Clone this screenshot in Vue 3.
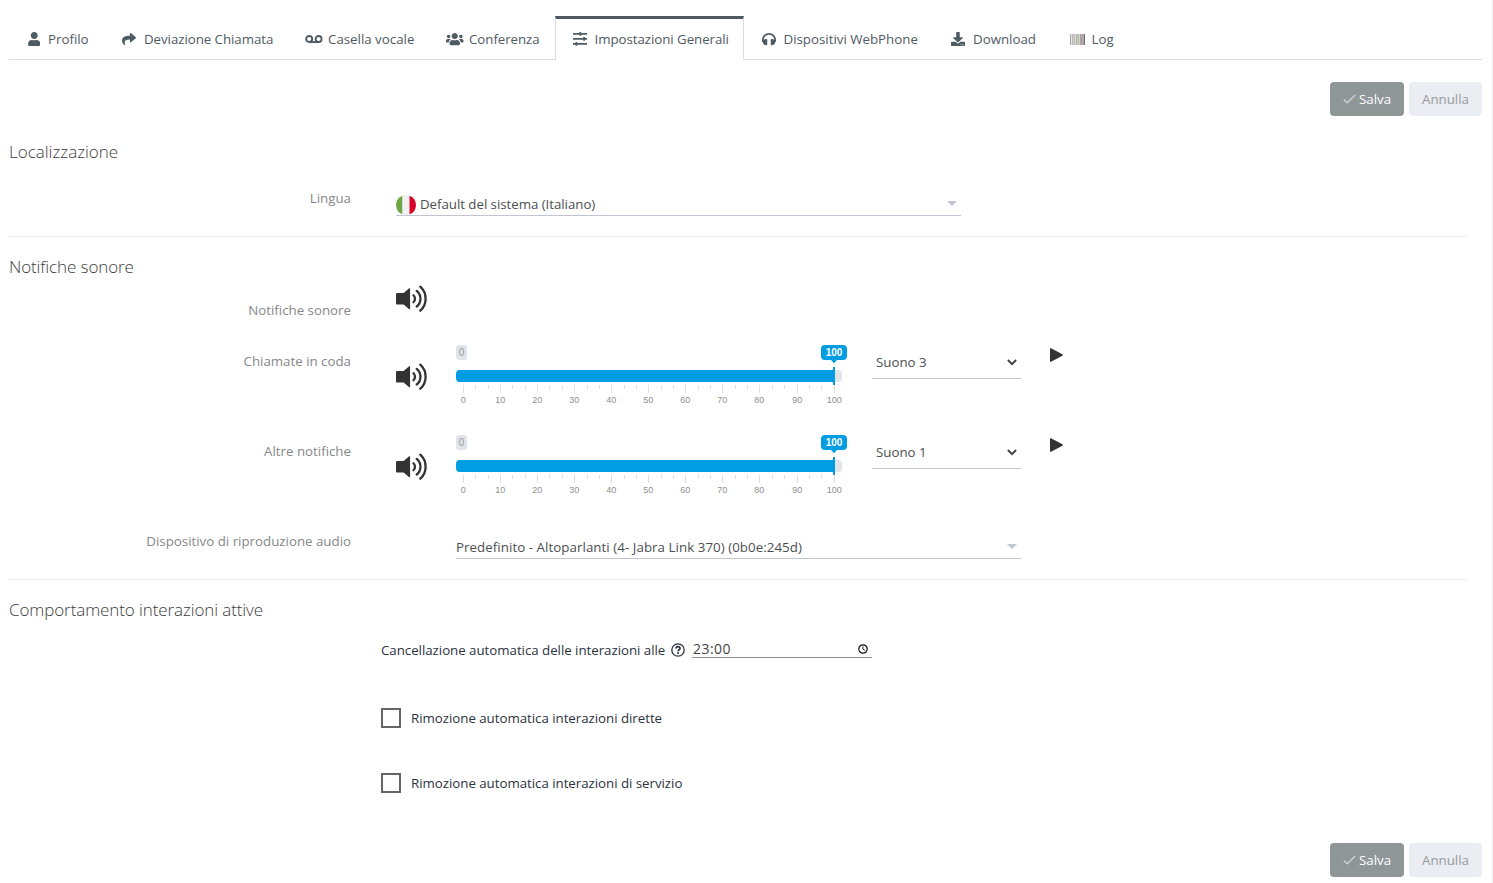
<script setup>
const tabs = [
  { label: 'Profilo', icon: 'user', cls: 't1' },
  { label: 'Deviazione Chiamata', icon: 'share', cls: 't2' },
  { label: 'Casella vocale', icon: 'voicemail', cls: 't3' },
  { label: 'Conferenza', icon: 'users', cls: 't4' },
  { label: 'Impostazioni Generali', icon: 'sliders', cls: 't5', active: true },
  { label: 'Dispositivi WebPhone', icon: 'headphones', cls: 't6' },
  { label: 'Download', icon: 'download', cls: 't7' },
  { label: 'Log', icon: 'barcode', cls: 't8' },
]

const icons = {
  user: { box: '0 0 448 512', w: 12.5, h: 14, d: 'M224 256c70.7 0 128-57.3 128-128S294.7 0 224 0 96 57.3 96 128s57.3 128 128 128zm89.6 32h-16.7c-22.2 10.2-46.9 16-72.9 16s-50.6-5.8-72.9-16h-16.7C60.2 288 0 348.2 0 422.4V464c0 26.5 21.5 48 48 48h352c26.5 0 48-21.5 48-48v-41.6c0-74.2-60.2-134.4-134.4-134.4z' },
  share: { box: '0 0 512 512', w: 14, h: 14, d: 'M503.691 189.836L327.687 37.851C312.281 24.546 288 35.347 288 56.015v80.053C127.371 137.907 0 170.1 0 322.326c0 61.441 39.581 122.309 83.333 154.132 13.653 9.931 33.111-2.533 28.077-18.631C66.066 312.814 132.917 274.316 288 272.085V360c0 20.7 24.3 31.453 39.687 18.164l176.004-152c11.071-9.562 11.086-26.753 0-36.328z' },
  users: { box: '0 0 640 512', w: 17.5, h: 14, d: 'M96 224c35.3 0 64-28.7 64-64s-28.7-64-64-64-64 28.7-64 64 28.7 64 64 64zm448 0c35.3 0 64-28.7 64-64s-28.7-64-64-64-64 28.7-64 64 28.7 64 64 64zm32 32h-64c-17.6 0-33.5 7.1-45.1 18.6 40.3 22.1 68.9 62 75.1 109.4h66c17.7 0 32-14.3 32-32v-32c0-35.3-28.7-64-64-64zm-256 0c61.9 0 112-50.1 112-112S381.9 32 320 32 208 82.1 208 144s50.1 112 112 112zm76.8 32h-8.3c-20.8 10-43.9 16-68.5 16s-47.6-6-68.5-16h-8.3C179.6 288 128 339.6 128 403.2V432c0 26.5 21.5 48 48 48h288c26.5 0 48-21.5 48-48v-28.8c0-63.6-51.6-115.2-115.2-115.2zm-223.7-13.4C161.5 263.1 145.6 256 128 256H64c-35.3 0-64 28.7-64 64v32c0 17.7 14.3 32 32 32h65.9c6.3-47.4 34.9-87.3 75.2-109.4z' },
  headphones: { box: '0 0 512 512', w: 14, h: 14, d: 'M256 32C114.52 32 0 146.497 0 288v48a32 32 0 0 0 17.689 28.622l14.383 7.191C34.083 431.903 83.421 480 144 480h24c13.255 0 24-10.745 24-24V280c0-13.255-10.745-24-24-24h-24c-31.342 0-59.671 12.879-80 33.627V288c0-105.869 86.131-192 192-192s192 86.131 192 192v1.627C427.671 268.879 399.342 256 368 256h-24c-13.255 0-24 10.745-24 24v176c0 13.255 10.745 24 24 24h24c60.579 0 109.917-48.098 111.928-108.187l14.382-7.191A32 32 0 0 0 512 336v-48c0-141.479-114.496-256-256-256z' },
  download: { box: '0 0 512 512', w: 14, h: 14, d: 'M216 0h80c13.3 0 24 10.7 24 24v168h87.7c17.8 0 26.7 21.5 14.1 34.1L269.7 378.3c-7.5 7.5-19.8 7.5-27.3 0L90.1 226.1c-12.6-12.6-3.7-34.1 14.1-34.1H192V24c0-13.3 10.7-24 24-24zm296 376v112c0 13.3-10.7 24-24 24H24c-13.3 0-24-10.7-24-24V376c0-13.3 10.7-24 24-24h146.7l49 49c20.1 20.1 52.5 20.1 72.6 0l49-49H488c13.3 0 24 10.7 24 24zm-124 88c0-11-9-20-20-20s-20 9-20 20 9 20 20 20 20-9 20-20zm64 0c0-11-9-20-20-20s-20 9-20 20 9 20 20 20 20-9 20-20z' },
}

const barcode = ['#a3a9c9', '#e9e2dc', '#b3b8ba', '#d3cfca', '#c9b9b4', '#d9dcdf', '#a9b9b4', '#c9cfb9', '#b4b9a4', '#d4d9cf', '#b49fa4', '#a99fa9', '#c9a9a4', '#9fa4ae', '#68747e']

const ticks = Array.from({ length: 31 }, (_, i) => ({
  x: Math.round(7 + (i * 370.6) / 30),
  major: i % 3 === 0,
  label: (i / 3) * 10,
}))

const sounds = [
  { label: 'Chiamate in coda', sound: 'Suono 3' },
  { label: 'Altre notifiche', sound: 'Suono 1' },
]
const removals = ['Rimozione automatica interazioni dirette', 'Rimozione automatica interazioni di servizio']
const speaker = 'M1 11h6.600L13.200 6.200h.9v21h-.9l-5.600-4.800H1a1 1 0 0 1-1-1v-9.400a1 1 0 0 1 1-1z'
const waves = 'M17.500 13.200a4.900 4.900 0 0 1 0 7M20.700 8.900a10 10 0 0 1 0 15.600M24.300 4.700a16.200 16.200 0 0 1 0 24'
</script>

<template>
  <div class="page">
    <nav class="tabs">
      <a v-for="t in tabs" :key="t.label" class="tab" :class="[t.cls, { active: t.active }]">
        <span class="tab-icon">
          <svg v-if="icons[t.icon]" :width="icons[t.icon].w" :height="icons[t.icon].h" :viewBox="icons[t.icon].box">
            <path :d="icons[t.icon].d" fill="currentColor" />
          </svg>
          <svg v-else-if="t.icon === 'voicemail'" width="18" height="14" viewBox="0 0 18 14">
            <g fill="none" stroke="currentColor" stroke-width="1.9">
              <circle cx="4.2" cy="7" r="3" /><circle cx="13.6" cy="7" r="3" /><path d="M4.2 10.100h9.400" />
            </g>
          </svg>
          <svg v-else-if="t.icon === 'sliders'" width="14" height="14" viewBox="0 0 14 14">
            <path d="M0 1h14v1.700H0zM0 6h14v1.700H0zM0 11h14v1.700H0zM6.500 0h1.700v3.700H6.500zM10.300 5h1.700v3.700h-1.700zM2.500 10h1.700v3.700H2.500z" fill="currentColor" />
          </svg>
          <svg v-else width="15" height="14" viewBox="0 0 15 14" shape-rendering="crispEdges">
            <rect v-for="(c, i) in barcode" :key="i" :x="i" y="1" width="1" height="11" :fill="c" />
          </svg>
        </span>
        <span class="tab-label">{{ t.label }}</span>
      </a>
    </nav>

    <div class="actions top">
      <button class="btn save">
        <svg width="13" height="10" viewBox="0 0 13 10"><path d="M.8 5.400l3.400 3.400L12.200.9" fill="none" stroke="#ced2d3" stroke-width="1.400" /></svg>
        <span>Salva</span>
      </button>
      <button class="btn cancel">Annulla</button>
    </div>

    <section class="section locale">
      <h2>Localizzazione</h2>
      <div class="row lingua">
        <label>Lingua</label>
        <div class="combo">
          <svg class="flag" width="20" height="20" viewBox="0 0 20 20">
            <path d="M6.500.65a10 10 0 0 0 0 18.700z" fill="#6da544" />
            <path d="M6.500.65a10 10 0 0 1 7 0v18.700a10 10 0 0 1-7 0z" fill="#f0f0f0" />
            <path d="M13.500.65a10 10 0 0 1 0 18.700z" fill="#d80027" />
          </svg>
          <span class="combo-text">Default del sistema (Italiano)</span>
          <i class="caret"></i>
        </div>
      </div>
    </section>

    <section class="section sound">
      <h2 class="tight">Notifiche sonore</h2>
      <div class="row main-sound">
        <label>Notifiche sonore</label>
        <svg class="volume" width="34" height="33" viewBox="0 0 34 33">
          <path :d="speaker" fill="#333" /><path :d="waves" fill="none" stroke="#333" stroke-width="2.300" stroke-linecap="round" />
        </svg>
      </div>

      <div v-for="s in sounds" :key="s.label" class="row level">
        <label>{{ s.label }}</label>
        <svg class="volume" width="34" height="33" viewBox="0 0 34 33">
          <path :d="speaker" fill="#333" /><path :d="waves" fill="none" stroke="#333" stroke-width="2.300" stroke-linecap="round" />
        </svg>
        <svg class="range" width="392" height="62" viewBox="0 0 392 62">
          <rect x="0" y="0" width="11" height="15" rx="3" fill="#e1e4e9" />
          <text class="range-text" x="5.500" y="11" fill="#999">0</text>
          <rect x="0" y="25" width="386" height="12" rx="4" fill="#e1e4e9" />
          <path d="M4 25H378V37H4a4 4 0 0 1-4-4V29a4 4 0 0 1 4-4z" fill="#009de2" />
          <rect x="377" y="22" width="2" height="18" fill="#009de2" />
          <rect x="365" y="0" width="26" height="15" rx="4" fill="#009de2" />
          <path d="M375 15h6l-3 3.200z" fill="#009de2" />
          <text class="range-text bold" x="378" y="11" fill="#fff">100</text>
          <g v-for="k in ticks" :key="k.x">
            <rect :x="k.x" y="40" width="1" :height="k.major ? 8 : 4" fill="#dcdfe4" />
            <text v-if="k.major" class="tick-text" :x="k.x + 0.3" y="57.500" fill="#8f8f8f">{{ k.label }}</text>
          </g>
        </svg>
        <div class="select">
          <span>{{ s.sound }}</span>
          <svg width="10" height="7" viewBox="0 0 10 7"><path d="M.9 1l4.100 4.100L9.100 1" fill="none" stroke="#444" stroke-width="2" /></svg>
        </div>
        <svg class="play" width="14" height="14" viewBox="0 0 14 14"><path d="M0 .8Q0-.2 1 .3L12.400 6.200Q13.400 7 12.400 7.800L1 13.700Q0 14.200 0 13.200z" fill="#333" /></svg>
      </div>

      <div class="row device">
        <label>Dispositivo di riproduzione audio</label>
        <div class="combo">
          <span class="combo-text">Predefinito - Altoparlanti (4- Jabra Link 370) (0b0e:245d)</span>
          <i class="caret"></i>
        </div>
      </div>
    </section>

    <section class="section behaviour">
      <h2 class="tight">Comportamento interazioni attive</h2>
      <div class="auto-clear">
        <span class="auto-text">Cancellazione automatica delle interazioni alle</span>
        <svg class="help" width="14" height="14" viewBox="0 0 14 14">
          <circle cx="7" cy="7" r="6.200" fill="none" stroke="#2b333d" stroke-width="1.300" />
          <path d="M5 5.500C5.100 4.300 5.900 3.700 7 3.700s2 .7 2 1.700c0 1.400-1.900 1.300-1.900 2.800" fill="none" stroke="#2b333d" stroke-width="1.700" />
          <circle cx="7.100" cy="10.100" r="1.050" fill="#2b333d" />
        </svg>
        <div class="time">
          <span>23:00</span>
          <svg width="10" height="10" viewBox="0 0 10 10"><circle cx="5" cy="5" r="4.200" fill="none" stroke="#111" stroke-width="1.200" /><path d="M4.900 2.300v2.900l2 1.200" fill="none" stroke="#111" stroke-width=".9" /></svg>
        </div>
      </div>
      <div v-for="r in removals" :key="r" class="check">
        <i class="box"></i><span>{{ r }}</span>
      </div>
    </section>

    <div class="actions">
      <button class="btn save">
        <svg width="13" height="10" viewBox="0 0 13 10"><path d="M.8 5.400l3.400 3.400L12.200.9" fill="none" stroke="#ced2d3" stroke-width="1.400" /></svg>
        <span>Salva</span>
      </button>
      <button class="btn cancel">Annulla</button>
    </div>
  </div>
</template>

<style>
body { background: #fff; overflow: hidden; }
</style>

<style scoped>
.page {
  box-sizing: border-box;
  width: 1493px;
  height: 883px;
  padding: 16px 10px 0 9px;
  border-right: 1px solid #eeeff0;
  font: 13.3px/20px "Open Sans", "Noto Sans", sans-serif;
  color: #4f5a62;
  white-space: nowrap;
}
svg { display: block; flex: none; }
.tabs {
  display: grid;
  grid-template-columns: 96px 184px 141px 125px 189px 190px 118px 80px;
  height: 43px;
  border-bottom: 1px solid #dcdddf;
}
.tab { display: flex; align-items: center; box-sizing: border-box; height: 44px; padding: 2px 0 0 18.500px; color: #4f5b63; }
.tab-icon { flex: none; width: 20.500px; }
.tab-label { margin-top: -1px; }
.t2, .t4, .t5 { letter-spacing: -0.05px; }
.t2, .t7, .t8 { padding-left: 17px; }
.t6 { padding-left: 18px; }
.t6 .tab-icon { width: 21.5px; }
.t3, .t4 { padding-left: 16px; }
.t3 .tab-icon, .t4 .tab-icon { width: 23px; }
.t2 .tab-icon, .t7 .tab-icon { width: 22px; }
.t8 { padding-left: 18px; }
.t8 .tab-icon { width: 21.500px; }
.t8 .tab-icon svg { margin-top: 1px; }
.tab.active { padding: 0 0 0 17px; background: #fff; border: 1px solid #dcdddf; border-top: 3px solid #4f5b63; border-bottom: 0; }
.tab.active .tab-icon { width: 21.500px; margin-top: -1px; }
.tab.active .tab-label { margin-top: -2px; }
.actions { display: flex; justify-content: flex-end; gap: 5px; height: 34px; }
.actions.top { margin-top: 22px; }
.btn { display: flex; align-items: center; box-sizing: border-box; height: 34px; padding: 0; border: 0; border-radius: 4px; font: inherit; }
.save { width: 74px; padding-left: 13px; gap: 3px; background: #8e9698; color: #fff; }
.cancel { width: 73px; justify-content: center; background: #eaedf2; color: #999b9e; }
h2 { margin: 0; font-size: 17px; line-height: 24px; font-weight: 300; color: #3c3c3c; }
h2.tight { letter-spacing: -0.1px; }
.section { box-sizing: border-box; width: 1458px; }
.locale { height: 121px; padding-top: 24px; border-bottom: 1px solid #eceded; }
.sound { height: 343px; padding-top: 18px; border-bottom: 1px solid #eceded; }
.behaviour { height: 263px; padding-top: 18px; }
.row { display: flex; align-items: flex-start; }
.row label { flex: none; width: 342px; margin-right: 45px; text-align: right; color: #868889; }
.lingua { margin-top: 24px; }
.combo { display: flex; align-items: center; box-sizing: border-box; width: 565px; height: 24px; border-bottom: 1px solid #bfc5d3; color: #4c4f52; }
.lingua .combo { margin-top: 4px; letter-spacing: -0.04px; }
.flag { margin: 3px 4px 0 0; }
.combo-text { flex: 1; }
.caret { margin: 0 4px 1px 0; border: 5px solid transparent; border-top-color: #bfc5d3; border-bottom: 0; }
.main-sound { height: 66px; }
.main-sound label { margin-top: 21px; }
.main-sound .volume { margin-top: 3px; }
.level { height: 90px; }
.level label { margin-top: 6px; }
.level .volume { margin: 15px 26px 0 0; }
.select { display: flex; align-items: center; justify-content: space-between; box-sizing: border-box; width: 149px; height: 34px; margin-left: 24px; padding: 0 4px; border-bottom: 1px solid #bfc5d3; color: #4c4f52; }
.select svg { margin-top: 1px; }
.play { margin: 3px 0 0 29px; }
.device label { margin: 6px 105px 0 0; }
.device .combo { height: 25px; margin-top: 9px; padding-top: 2px; letter-spacing: 0.06px; }
.range-text { font: 10px "Liberation Sans", sans-serif; text-anchor: middle; }
.range-text.bold { font-weight: 700; }
.tick-text { font: 9px "Liberation Sans", sans-serif; text-anchor: middle; }
.auto-clear { display: flex; align-items: center; height: 20px; margin: 18px 0 0 372px; color: #2b333d; }
.auto-text { width: 290px; letter-spacing: -0.03px; }
.time { display: flex; align-items: center; justify-content: space-between; box-sizing: border-box; width: 180px; height: 18px; margin: 0 0 3px 7px; padding: 1px 4px 0 1px; border-bottom: 1px solid #8b8d90; color: #444; font-size: 14px; letter-spacing: 0.45px; }
.check { display: flex; align-items: center; gap: 10px; height: 20px; margin: 48px 0 0 372px; color: #2b333d; letter-spacing: -0.03px; }
.check + .check { margin-top: 45px; }
.box { box-sizing: border-box; width: 20px; height: 20px; border: 2px solid #666; }
</style>
